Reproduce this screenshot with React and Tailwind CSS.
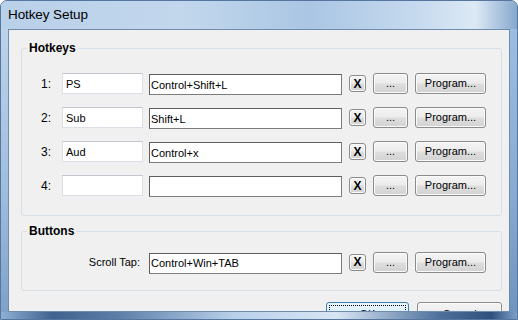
import React from "react";

const hotkeys = [
  { n: "1:", name: "PS", keys: "Control+Shift+L" },
  { n: "2:", name: "Sub", keys: "Shift+L" },
  { n: "3:", name: "Aud", keys: "Control+x" },
  { n: "4:", name: "", keys: "" },
];

const btn =
  "flex items-center justify-center rounded-[3px] border border-[#8b8b8b] bg-[linear-gradient(to_bottom,#f4f4f4_0%,#ececec_48%,#dedede_52%,#d2d2d2_100%)] shadow-[inset_0_0_0_1px_#fbfbfb] text-[11px] text-black leading-none";

function KeyButtons() {
  return (
    <>
      <button className={`${btn} ml-[7px] w-[17px] h-[17px] font-bold text-[12px]`}>X</button>
      <button className={`${btn} ml-[7px] w-[35px] h-[21px] text-[#555]`}>...</button>
      <button className={`${btn} ml-[7px] w-[71px] h-[21px]`}>Program...</button>
    </>
  );
}

function KeyInput({ value }) {
  return (
    <input
      readOnly
      defaultValue={value}
      className="h-[21px] w-[193px] border border-[#7d7d7d] border-t-[#5f5f5f] border-l-[#5f5f5f] bg-white px-[1px] text-[11px] text-black outline-none"
    />
  );
}

export default function App() {
  return (
    <div className="flex h-[320px] w-[518px] flex-col overflow-hidden rounded-t-[7px] border border-[#5676a0] bg-[#b4cce6] font-['Liberation_Sans',Arial,sans-serif] text-black">
      <div className="flex h-[28px] items-center pl-[7px] bg-[linear-gradient(90deg,#b9d0e9_0%,#c2d7ec_35%,#aac6e4_60%,#c5d9ee_80%,#dce9f5_92%,#86a8cd_100%)]">
        <span className="text-[13.5px] tracking-[-0.1px]">Hotkey Setup</span>
      </div>
      <div className="flex min-h-0 flex-1">
        <div className="w-[7px] bg-[linear-gradient(to_bottom,#bdd3ea,#9ebbdc_60%,#7fa1c8)]" />
        <div className="flex w-[502px] flex-col overflow-hidden border border-[#6f8cad] bg-[#f0f0f0] pl-[12px] pr-[7px]">
          <fieldset className="mt-[11px] rounded-[3px] border border-[#d5dfe5] pt-[18px] pb-[19px]">
            <legend className="ml-[5px] px-[2px] text-[12px] font-bold leading-[14px]">Hotkeys</legend>
            <div className="flex flex-col gap-[13px]">
              {hotkeys.map((h) => (
                <div key={h.n} className="flex h-[21px] items-center">
                  <span className="w-[29px] text-right text-[12px]">{h.n}</span>
                  <input
                    readOnly
                    defaultValue={h.name}
                    className="ml-[11px] h-[21px] w-[81px] border border-[#dbdfe6] border-t-[#c3c6cc] bg-white px-[3px] text-[11px] text-black outline-none"
                  />
                  <div className="ml-[6px]">
                    <KeyInput value={h.keys} />
                  </div>
                  <KeyButtons />
                </div>
              ))}
            </div>
          </fieldset>
          <fieldset className="mt-[8px] rounded-[3px] border border-[#d5dfe5] pt-[13px] pb-[17px]">
            <legend className="ml-[5px] px-[2px] text-[12px] font-bold leading-[14px]">Buttons</legend>
            <div className="flex h-[22px] items-center">
              <span className="w-[118px] text-right text-[11px]">Scroll Tap:</span>
              <div className="ml-[9px]">
                <KeyInput value="Control+Win+TAB" />
              </div>
              <KeyButtons />
            </div>
          </fieldset>
          <div className="mt-[11px] flex justify-end">
            <button className="flex h-[23px] w-[83px] items-start justify-center rounded-[3px] border border-[#3c7fb1] bg-[linear-gradient(to_bottom,#eaf6fd,#d9f0fc_50%,#bee6fd_50%,#a7d9f5)] p-[2px]">
              <span className="flex h-full w-full justify-center border border-dotted border-black pt-[3px] text-[11px] leading-none">OK</span>
            </button>
            <button className={`${btn} ml-[8px] h-[23px] w-[85px] items-start pt-[6px]`}>Cancel</button>
          </div>
        </div>
        <div className="w-[7px] bg-[linear-gradient(to_bottom,#9dbde0,#87aad2_60%,#6f94c0)]" />
      </div>
      <div className="h-[7px] bg-[linear-gradient(90deg,#8fb0d6_0%,#3f628e_10%,#5a7ca6_22%,#b8d0ea_45%,#d8e6f4_65%,#4e709b_85%,#2f507c_95%,#7d9fc8_100%)]" />
    </div>
  );
}
